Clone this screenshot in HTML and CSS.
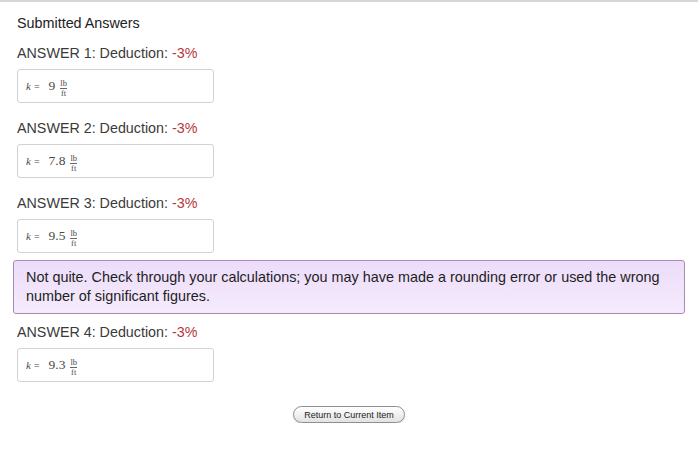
FILE: index.html
```html
<!DOCTYPE html>
<html>
<head>
<meta charset="utf-8">
<link rel="stylesheet" href="styles.css">
</head>
<body>
<div class="page">
  <h2 class="title">Submitted Answers</h2>

  <div class="label">ANSWER 1: Deduction: <span class="ded">-3%</span></div>
  <div class="answer"><span class="k">k</span><span class="eq">=</span><span class="num">9</span><span class="frac"><span class="top">lb</span><span class="bot">ft</span></span></div>

  <div class="label">ANSWER 2: Deduction: <span class="ded">-3%</span></div>
  <div class="answer"><span class="k">k</span><span class="eq">=</span><span class="num">7.8</span><span class="frac"><span class="top">lb</span><span class="bot">ft</span></span></div>

  <div class="label">ANSWER 3: Deduction: <span class="ded">-3%</span></div>
  <div class="answer"><span class="k">k</span><span class="eq">=</span><span class="num">9.5</span><span class="frac"><span class="top">lb</span><span class="bot">ft</span></span></div>

  <div class="feedback">Not quite. Check through your calculations; you may have made a rounding error or used the wrong number of significant figures.</div>

  <div class="label">ANSWER 4: Deduction: <span class="ded">-3%</span></div>
  <div class="answer"><span class="k">k</span><span class="eq">=</span><span class="num">9.3</span><span class="frac"><span class="top">lb</span><span class="bot">ft</span></span></div>

  <div class="actions"><button class="btn">Return to Current Item</button></div>
</div>
</body>
</html>
```
FILE: styles.css
```css
html, body {
  margin: 0;
  padding: 0;
  background: #fff;
}
body {
  font-family: "Liberation Sans", Arial, sans-serif;
  color: #333;
}
.page {
  border-top: 2px solid #d6d6d6;
  margin-right: 2px;
  padding: 13px 0 0 17px;
}
.title {
  margin: 0 0 12px 0;
  font-size: 14.35px;
  line-height: 17px;
  font-weight: normal;
  color: #222;
}
.label {
  font-size: 14.3px;
  line-height: 18px;
  margin: 0 0 7px 0;
  color: #3a3a3a;
}
.ded {
  color: #b5373d;
}
.answer {
  box-sizing: border-box;
  width: 197px;
  height: 34px;
  border: 1px solid #d2d2d2;
  border-radius: 3px;
  margin-bottom: 16px;
  display: flex;
  align-items: center;
  padding-left: 8px;
  font-family: "Liberation Serif", "DejaVu Serif", serif;
  color: #4a4a4a;
}
.k {
  font-style: italic;
  font-size: 11px;
}
.eq {
  font-size: 10px;
  margin: 0 9px 0 3px;
}
.num {
  font-size: 13.5px;
  margin-right: 5px;
}
.frac {
  display: inline-flex;
  flex-direction: column;
  align-items: center;
  font-size: 8.5px;
  line-height: 7px;
  margin-top: 4px;
}
.frac .top {
  border-bottom: 1px solid #666;
  padding: 0 0 1px;
}
.frac .bot {
  padding-top: 1px;
}
.feedback {
  box-sizing: border-box;
  margin: -9px 13px 9px -4px;
  padding: 7px 12px 7px 12px;
  border: 1px solid #a98bb8;
  border-radius: 3px;
  background: linear-gradient(#ecdcf9, #f5ebfd);
  font-size: 14.4px;
  line-height: 19px;
  color: #1e1e1e;
}
.actions {
  display: flex;
  justify-content: center;
  padding-top: 8px;
  margin-left: -17px;
}
.btn {
  font-family: "Liberation Sans", Arial, sans-serif;
  font-size: 9px;
  color: #222;
  height: 17px;
  padding: 0 10px;
  border: 1px solid #8e8e8e;
  border-radius: 9px;
  background: linear-gradient(#ffffff, #e2e2e2);
  box-shadow: 0 1px 1px rgba(0,0,0,0.15);
}
```
